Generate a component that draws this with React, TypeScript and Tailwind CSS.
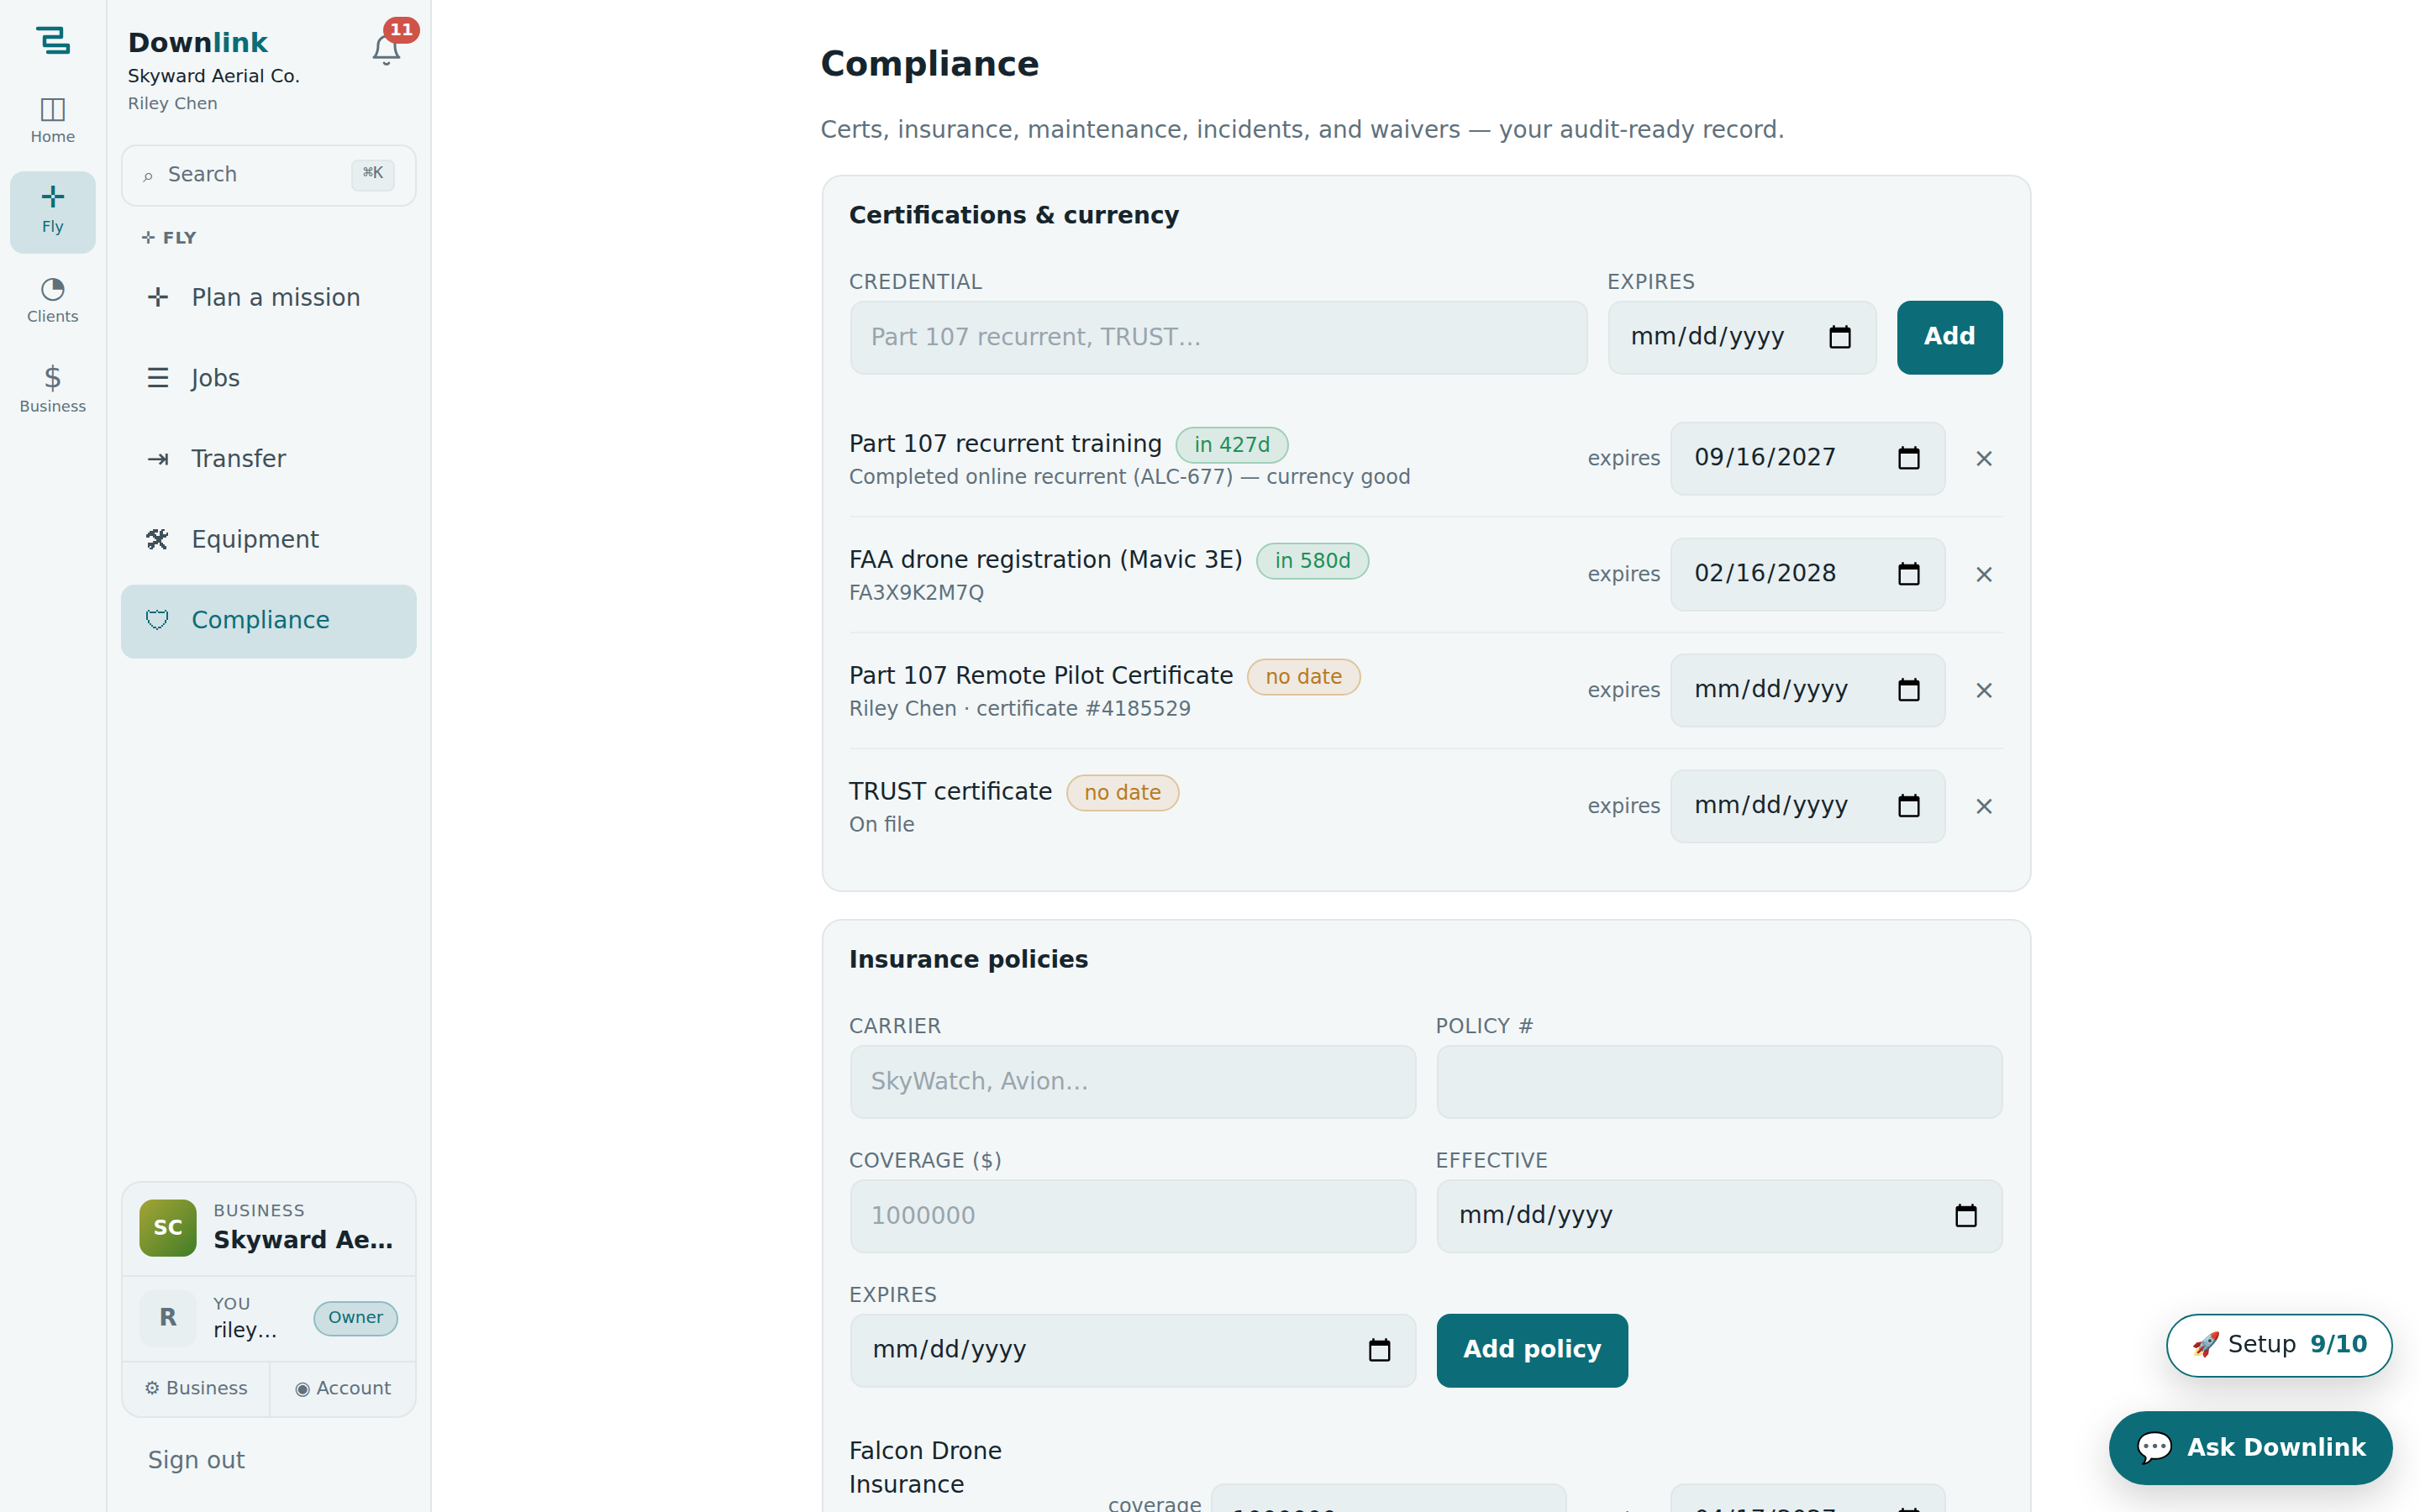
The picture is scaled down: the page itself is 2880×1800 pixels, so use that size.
import type { ReactNode } from "react";

const dateInput =
  "h-[88px] min-w-0 rounded-[16px] border-2 border-[#e1e7e9] bg-[#e8eff1] pb-[2px] pr-[18px] text-[28px] text-[#16252d] outline-none [&::-webkit-calendar-picker-indicator]:ml-[48px] [&::-webkit-calendar-picker-indicator]:h-[30px] [&::-webkit-calendar-picker-indicator]:w-[40px] [&::-webkit-calendar-picker-indicator]:p-0 [&::-webkit-datetime-edit-month-field]:px-[2px] [&::-webkit-datetime-edit-day-field]:px-[2px] [&::-webkit-datetime-edit-year-field]:px-[2px]";

const textInput =
  "h-[88px] w-full min-w-0 rounded-[16px] border-2 border-[#e1e7e9] bg-[#e8eff1] pl-[23px] pr-[22px] pb-[2px] text-[28px] text-[#16252d] placeholder-[#98a5ad] outline-none";

const tools = [
  "....###..##..",
  "..#####.##...",
  ".####...##..#",
  "######..#####",
  "##..########.",
  ".....#####...",
  "......###....",
  "....#####....",
  ".######.##...",
  ".####...###..",
  ".#.##....###.",
  "..##......##.",
];

const shield = [
  ".#....#....#.",
  "#.####.####.#",
  "#...........#",
  "#...........#",
  "#...........#",
  "#...........#",
  ".#.........#.",
  ".#.........#.",
  "..#.......#..",
  "...#.....#...",
  "....##.##....",
  "......#......",
];

// small bitmap icons, one character per cell
const PixelIcon = ({ rows }: { rows: string[] }) => (
  <svg
    className="mr-[2px]"
    width="26"
    height="24"
    viewBox="0 0 13 12"
    fill="currentColor"
    shapeRendering="crispEdges"
  >
    {rows.map((row, y) =>
      row.split("").map((cell, x) => cell === "#" && <rect key={`${x}-${y}`} x={x} y={y} width="1" height="1" />)
    )}
  </svg>
);

const railItems = [
  { icon: "◫", label: "Home" },
  { icon: "✛", label: "Fly", active: true },
  { icon: "◔", label: "Clients" },
  { icon: "$", label: "Business" },
];

const navItems = [
  { icon: "✛", label: "Plan a mission" },
  { icon: "☰", label: "Jobs" },
  { icon: "⇥", label: "Transfer" },
  { icon: <PixelIcon rows={tools} />, label: "Equipment" },
  { icon: <PixelIcon rows={shield} />, label: "Compliance", active: true },
];

const credentials = [
  {
    name: "Part 107 recurrent training",
    note: "Completed online recurrent (ALC-677) — currency good",
    status: "in 427d",
    expires: "2027-09-16",
  },
  {
    name: "FAA drone registration (Mavic 3E)",
    note: "FA3X9K2M7Q",
    status: "in 580d",
    expires: "2028-02-16",
  },
  {
    name: "Part 107 Remote Pilot Certificate",
    note: "Riley Chen · certificate #4185529",
    status: "no date",
    expires: "",
  },
  { name: "TRUST certificate", note: "On file", status: "no date", expires: "" },
];

const Logo = () => (
  <svg width="48" height="48" viewBox="0 0 48 48" fill="none">
    <path
      d="M6 10H34V20H14V30H42V38H18"
      stroke="#0c6d78"
      strokeWidth="4.4"
      strokeLinecap="round"
      strokeLinejoin="round"
    />
  </svg>
);

const Bell = () => (
  <svg
    width="40"
    height="40"
    viewBox="0 0 24 24"
    fill="none"
    stroke="#5f717c"
    strokeWidth="1.8"
    strokeLinecap="round"
    strokeLinejoin="round"
  >
    <path d="M18 8a6 6 0 0 0-12 0c0 7-3 9-3 9h18s-3-2-3-9" />
    <path d="M13.7 21a2 2 0 0 1-3.4 0" />
  </svg>
);

const Rail = () => (
  <nav className="flex w-[128px] shrink-0 flex-col items-center border-r-2 border-[#e1e7e9] bg-[#f3f7f8] px-[12px] pt-[24px]">
    <Logo />
    <div className="mt-[25px] flex w-full flex-col gap-[9px]">
      {railItems.map((item) => (
        <a
          key={item.label}
          className={`flex h-[98px] flex-col items-center rounded-[16px] pt-[10px] ${
            item.active ? "bg-[#d0e2e5] text-[#0c6d78]" : "text-[#5f717c]"
          }`}
        >
          <span className="h-[42px] text-[36px] leading-[42px]">{item.icon}</span>
          <span className="text-[18px] leading-[27px]">{item.label}</span>
        </a>
      ))}
    </div>
  </nav>
);

const AccountCard = () => (
  <div className="flex h-[282px] flex-col rounded-[24px] border-2 border-[#e1e7e9] bg-[#eef3f6]">
    <div className="flex h-[112px] items-center gap-5 border-b-2 border-[#e1e7e9] px-5 pb-[2px]">
      <div className="flex size-[68px] shrink-0 items-center justify-center rounded-[16px] bg-linear-135 from-[#a4a435] to-[#3d7d27] text-[24px] font-bold text-white">
        SC
      </div>
      <div className="min-w-0 flex-1">
        <div className="text-[20px] leading-[29px] tracking-[0.06em] text-[#5f717c]">BUSINESS</div>
        <div className="text-[28px] leading-[41px] font-bold whitespace-nowrap">Skyward Ae…</div>
      </div>
    </div>
    <div className="flex h-[102px] items-center gap-5 border-b-2 border-[#e1e7e9] px-5">
      <div className="flex size-[68px] shrink-0 items-center justify-center rounded-[16px] bg-[#e8eff1] pb-[2px] text-[28px] font-bold text-[#5f717c]">
        R
      </div>
      <div className="min-w-0 flex-1">
        <div className="text-[20px] leading-[28px] tracking-[0.06em] text-[#5f717c]">YOU</div>
        <div className="text-[24px] leading-[36px] whitespace-nowrap">riley…</div>
      </div>
      <span className="flex h-[42px] items-center rounded-full border-2 border-[#8fbcc2] bg-[#cddfe3] px-4 pb-[5px] text-[20px] text-[#0c6d78]">
        Owner
      </span>
    </div>
    <div className="flex flex-1 text-[22px] text-[#5f717c]">
      <a className="flex w-[176px] items-center justify-center border-r-2 border-[#e1e7e9] pb-[3px]">⚙ Business</a>
      <a className="flex flex-1 items-center justify-center pb-[3px]">◉ Account</a>
    </div>
  </div>
);

const Sidebar = () => (
  <aside className="flex w-[386px] shrink-0 flex-col border-r-2 border-[#e1e7e9] bg-[#f3f7f8] px-4 pb-[41px]">
    <div className="flex h-[172px] items-start justify-between pl-2 pr-4 pt-[28px]">
      <div>
        <div className="text-[32px] leading-[46px] font-bold">
          Down<span className="text-[#0c6d78]">link</span>
        </div>
        <div className="mt-px text-[22px] leading-[32px]">Skyward Aerial Co.</div>
        <div className="text-[20px] leading-[32px] text-[#5f717c]">Riley Chen</div>
      </div>
      <div className="relative mt-[12px]">
        <Bell />
        <span className="absolute -top-[20px] left-[16px] flex h-[32px] w-[44px] items-center justify-center rounded-full bg-[#cf5349] pb-[2px] text-[20px] font-bold text-white">
          11
        </span>
      </div>
    </div>

    <div className="flex h-[74px] items-center rounded-[18px] border-2 border-[#e1e7e9] px-6 text-[24px] text-[#5f717c]">
      <span>⌕</span>
      <span className="ml-[17px] flex-1 pb-[2px]">Search</span>
      <kbd className="h-[38px] rounded-[8px] border-2 border-[#e1e7e9] bg-[#e8eff1] px-3 font-['DejaVu_Sans_Mono',monospace] text-[20px] leading-[26px]">
        ⌘K
      </kbd>
    </div>

    <div className="mt-[23px] pl-6 text-[20px] leading-[29px] font-bold tracking-[0.05em] text-[#5f717c]">✛ FLY</div>

    <div className="mt-[14px] flex flex-col gap-2">
      {navItems.map((item) => (
        <a
          key={item.label}
          className={`flex h-[88px] items-center rounded-[16px] pb-[2px] pl-[26px] text-[28px] ${
            item.active ? "bg-[#d0e2e5] text-[#0c6d78]" : "text-[#405058]"
          }`}
        >
          <span className="flex w-[36px] justify-center pb-[2px] text-[32px] leading-[40px]">{item.icon}</span>
          <span className="ml-[22px] leading-[40px]">{item.label}</span>
        </a>
      ))}
    </div>

    <div className="mt-auto">
      <AccountCard />
      <div className="pl-8 pt-[30px] text-[28px] leading-[41px] text-[#5f717c]">Sign out</div>
    </div>
  </aside>
);

const Card = ({ title, children }: { title: string; children: ReactNode }) => (
  <section className="rounded-[24px] border-2 border-[#e1e7e9] bg-[#f3f7f8] px-[32px] pb-[32px] pt-[26px]">
    <h2 className="-ml-px text-[28px] leading-[41px] font-bold">{title}</h2>
    {children}
  </section>
);

const Field = ({ label, children }: { label: string; children: ReactNode }) => (
  <label className="flex flex-col">
    <span className="-ml-px mb-[4px] mt-[9px] text-[24px] leading-[35px] tracking-[0.03em] text-[#5f717c] uppercase">
      {label}
    </span>
    {children}
  </label>
);

const Pill = ({ text }: { text: string }) => (
  <span
    className={`ml-[7px] rounded-full border-2 px-[20px] py-[6px] text-[24px] ${
      text === "no date"
        ? "border-[#dfc59c] bg-[#efe9e1] text-[#b87a1e]"
        : "border-[#9fd0b9] bg-[#dceae5] text-[#1f8f5a]"
    }`}
  >
    {text}
  </span>
);

const Compliance = () => (
  <main className="flex w-[1440px] flex-col">
    <h1 className="-ml-px mt-[47px] text-[40px] leading-[58px] font-bold">Compliance</h1>
    <p className="-ml-px mt-[29px] mb-[33px] text-[28px] leading-[41px] text-[#5f717c]">
      Certs, insurance, maintenance, incidents, and waivers — your audit-ready record.
    </p>

    <div className="flex flex-col gap-8">
      <Card title="Certifications & currency">
        <div className="mt-[33px] grid grid-cols-[1fr_320px_auto] items-end gap-6">
          <Field label="Credential">
            <input className={textInput} placeholder="Part 107 recurrent, TRUST…" />
          </Field>
          <Field label="Expires">
            <input type="date" className={`${dateInput} pl-[23px]`} />
          </Field>
          <button className="h-[88px] rounded-[16px] bg-[#0c6d78] px-8 pb-[2px] text-[28px] font-bold text-white">
            Add
          </button>
        </div>
        <div className="mt-8">
          {credentials.map((item) => (
            <div
              key={item.name}
              className="flex items-center border-b-2 border-[#e8edef] py-6 last:border-b-0"
            >
              <div className="-ml-px flex-1 pt-px">
                <div className="text-[28px] leading-[41px]">
                  {item.name} <Pill text={item.status} />
                </div>
                <div className="text-[24px] leading-[35px] text-[#5f717c]">{item.note}</div>
              </div>
              <span className="mr-[11px] text-[24px] text-[#5f717c]">expires</span>
              <input type="date" defaultValue={item.expires} className={`${dateInput} w-[328px] pl-[25px]`} />
              <button className="ml-6 w-[44px] pb-[2px] text-[32px] leading-[38px] text-[#5f717c]">×</button>
            </div>
          ))}
        </div>
      </Card>

      <Card title="Insurance policies">
        <div className="mt-[33px] grid grid-cols-2 items-end gap-6">
          <Field label="Carrier">
            <input className={textInput} placeholder="SkyWatch, Avion…" />
          </Field>
          <Field label="Policy #">
            <input className={textInput} />
          </Field>
          <Field label="Coverage ($)">
            <input className={textInput} placeholder="1000000" />
          </Field>
          <Field label="Effective">
            <input type="date" className={`${dateInput} pl-[23px]`} />
          </Field>
          <Field label="Expires">
            <input type="date" className={`${dateInput} pl-[23px]`} />
          </Field>
          <button className="h-[88px] justify-self-start rounded-[16px] bg-[#0c6d78] px-8 pb-[2px] text-[28px] font-bold text-white">
            Add policy
          </button>
        </div>
        <div className="mt-8 flex h-[252px] items-center py-6">
          <div className="-ml-px w-[309px] self-start text-[28px] leading-[40px]">
            Falcon Drone
            <br />
            Insurance
          </div>
          <span className="w-[123px] pt-[2px] text-[24px] leading-[35px] text-[#5f717c]">
            coverage
            <br />$
          </span>
          <input className={`${textInput} max-w-[424px]`} defaultValue="1000000" />
          <span className="mr-[11px] ml-[24px] text-[24px] text-[#5f717c]">expires</span>
          <input type="date" defaultValue="2027-04-17" className={`${dateInput} w-[328px] shrink-0 pl-[25px]`} />
          <button className="ml-6 w-[44px] shrink-0 text-[32px] leading-[38px] text-[#5f717c]">×</button>
        </div>
      </Card>
    </div>
  </main>
);

const App = () => {
  return (
    <div className="flex h-[1800px] w-[2880px] overflow-hidden bg-white font-['DejaVu_Sans',sans-serif] text-[#16252d]">
      <Rail />
      <Sidebar />
      <div className="flex flex-1 justify-center overflow-hidden pl-px">
        <Compliance />
      </div>

      <div className="fixed right-[32px] bottom-[32px] flex flex-col items-end gap-[40px]">
        <button className="flex h-[76px] items-center rounded-full border-2 border-[#0c6d78] bg-white px-[28px] pb-[2px] text-[28px] shadow-[0_16px_48px_rgba(0,0,0,0.18)]">
          <span>🚀 Setup</span>
          <span className="ml-4 font-bold text-[#0c6d78]">9/10</span>
        </button>
        <button className="flex h-[88px] items-center rounded-full bg-[#0c6d78] px-[32px] text-[28px] font-bold text-white shadow-[0_16px_48px_rgba(0,0,0,0.18)]">
          <span className="text-[36px]">💬</span>
          <span className="ml-4 pb-px">Ask Downlink</span>
        </button>
      </div>
    </div>
  );
};

export default App;
